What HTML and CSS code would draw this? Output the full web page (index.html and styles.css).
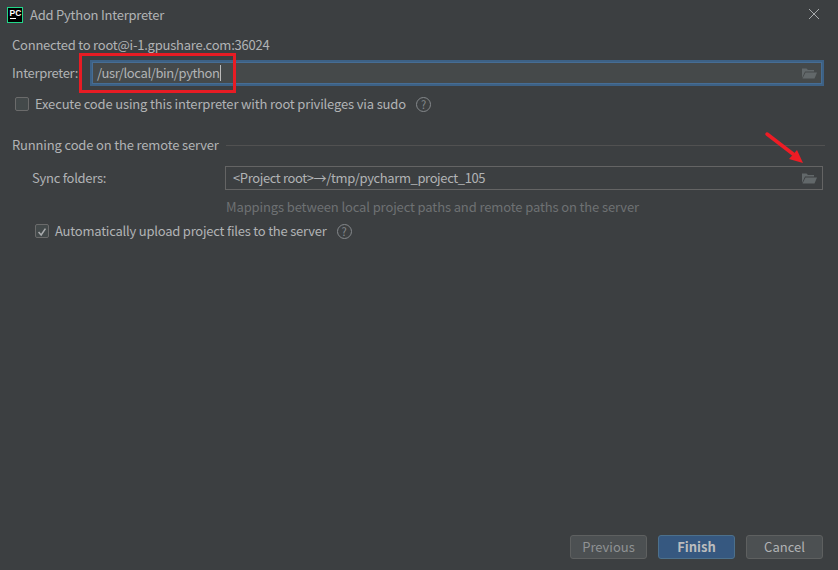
FILE: index.html
```html
<!DOCTYPE html>
<html lang="en">
<head>
<meta charset="utf-8">
<title>Add Python Interpreter</title>
<link rel="stylesheet" href="styles.css">
</head>
<body>
<div class="dialog">
  <header class="titlebar">
    <svg class="logo" width="16" height="16" viewBox="0 0 16 16">
      <rect x="0.5" y="0.5" width="15" height="15" fill="#000" stroke="#21d789"/>
      <text x="2.5" y="8.8" class="logo-text">PC</text>
      <rect x="3" y="11" width="6" height="1" fill="#fff"/>
    </svg>
    <span class="title">Add Python Interpreter</span>
    <svg class="close" width="12" height="12" viewBox="0 0 12 12"><path d="M1 1l10 10M11 1L1 11" stroke="#a8abad" stroke-width="1" fill="none"/></svg>
  </header>
  <main class="content">
    <div class="connected">Connected to root@i-1.gpushare.com:36024</div>
    <div class="interp-row">
      <label class="interp-label">Interpreter:</label>
      <div class="field field-focus">
        <span class="value">/usr/local/bin/python</span><span class="caret"></span>
        <svg class="folder" width="16" height="12" viewBox="0 0 16 12"><path d="M1 1.5h4.5l1.5 1.5h6v1.5H4L1 11z" fill="#62686a"/><path d="M4.5 5.5H16l-2.5 6H1.5z" fill="#62686a"/></svg>
      </div>
    </div>
    <div class="check-row sudo">
      <span class="box"></span>
      <span>Execute code using this interpreter with root privileges via sudo</span>
      <span class="help">?</span>
    </div>
    <div class="section-head">
      <span>Running code on the remote server</span>
      <span class="rule"></span>
    </div>
    <div class="sync-row">
      <label class="sync-label">Sync folders:</label>
      <div class="field field-plain">
        <span class="value">&lt;Project root&gt;→/tmp/pycharm_project_105</span>
        <svg class="folder" width="16" height="12" viewBox="0 0 16 12"><path d="M1 1.5h4.5l1.5 1.5h6v1.5H4L1 11z" fill="#62686a"/><path d="M4.5 5.5H16l-2.5 6H1.5z" fill="#62686a"/></svg>
      </div>
    </div>
    <div class="hint">Mappings between local project paths and remote paths on the server</div>
    <div class="check-row upload">
      <span class="box">
        <svg width="14" height="14" viewBox="0 0 14 14"><path d="M3 7l3 3.5L11 3" stroke="#a9abad" stroke-width="1.8" fill="none"/></svg>
      </span>
      <span>Automatically upload project files to the server</span>
      <span class="help">?</span>
    </div>
  </main>
  <footer class="footer">
    <button class="btn btn-muted">Previous</button>
    <button class="btn btn-primary">Finish</button>
    <button class="btn">Cancel</button>
  </footer>
  <div class="red-box"></div>
  <svg class="red-arrow" width="44" height="38" viewBox="0 0 44 38"><path d="M3 3L29 23" stroke="#ee1c25" stroke-width="3.5" stroke-linecap="round"/><path d="M39 32L25 28L33 19z" fill="#ee1c25"/></svg>
</div>
</body>
</html>
```
FILE: styles.css
```css
* { box-sizing: border-box; }
html, body { margin: 0; height: 100%; }
body { background: #3c3f41; color: #b1b3b5; font: 13px/18px "Noto Sans CJK SC", "Noto Sans", sans-serif; letter-spacing: -0.16px; }
.dialog { position: relative; width: 838px; height: 570px; display: flex; flex-direction: column; overflow: hidden; }
.titlebar { height: 30px; padding: 7px 12px 0 7px; display: flex; align-items: flex-start; flex: none; }
.logo { flex: none; }
.logo-text { font: 700 8.5px "Liberation Sans", sans-serif; fill: #fff; letter-spacing: 0; }
.title { margin-left: 7px; line-height: 16px; letter-spacing: -0.23px; }
.close { margin-left: auto; margin-top: 1px; margin-right: 6px; }
.content { flex: 1; padding: 6px 14px 0 12px; }
.connected { height: 18px; letter-spacing: -0.23px; }
.interp-row { display: flex; align-items: center; margin-top: 6px; height: 26px; }
.interp-label { width: 78px; flex: none; letter-spacing: -0.3px; white-space: nowrap; }
.field { display: flex; align-items: center; position: relative; }
.field-focus { width: 734px; height: 26px; background: #45494a; border: 2px solid #3d6185; padding-left: 5px; box-shadow: inset 0 0 0 1px #466d94; }
.field-plain { width: 598px; height: 24px; border: 1px solid #646464; margin-left: 0; padding-left: 7px; }
.value { letter-spacing: -0.38px; }
.caret { display: inline-block; width: 1px; height: 16px; background: #bbb; }
.folder { position: absolute; right: 5px; top: 50%; margin-top: -6px; }
.check-row { display: flex; align-items: center; }
.box { width: 14px; height: 14px; border: 1px solid #6b6b6b; background: #43494a; border-radius: 2px; display: flex; flex: none; }
.sudo { margin-top: 9px; padding-left: 3px; gap: 6px; }
.help { width: 15px; height: 15px; border: 1px solid #85898c; border-radius: 50%; color: #85898c; font-size: 11px; line-height: 13px; text-align: center; margin-left: 4px; flex: none; }
.section-head { display: flex; align-items: center; margin-top: 23px; height: 18px; gap: 7px; }
.rule { flex: 1; height: 1px; background: #515151; margin-right: -1px; }
.sync-row { display: flex; align-items: center; margin-top: 12px; padding-left: 20px; }
.sync-label { width: 193px; flex: none; letter-spacing: -0.26px; }
.hint { margin: 8px 0 0 214px; color: #6e7173; letter-spacing: -0.12px; }
.upload { margin-top: 6px; padding-left: 23px; gap: 6px; letter-spacing: -0.22px; }
.footer { flex: none; display: flex; justify-content: flex-end; gap: 11px; padding: 0 15px 11px 0; }
.btn { width: 77px; height: 24px; padding: 0; border: 1px solid #5e6060; border-radius: 3px; background: #4c5052; color: #b1b3b5; font: inherit; }
.btn-muted { color: #8f9294; }
.btn-primary { background: #365880; border-color: #4c708c; color: #bbbcbd; font-weight: 700; }
.red-box { position: absolute; left: 79px; top: 53px; width: 157px; height: 40px; border: 3px solid #e81c24; }
.red-arrow { position: absolute; left: 764px; top: 131px; }
```
